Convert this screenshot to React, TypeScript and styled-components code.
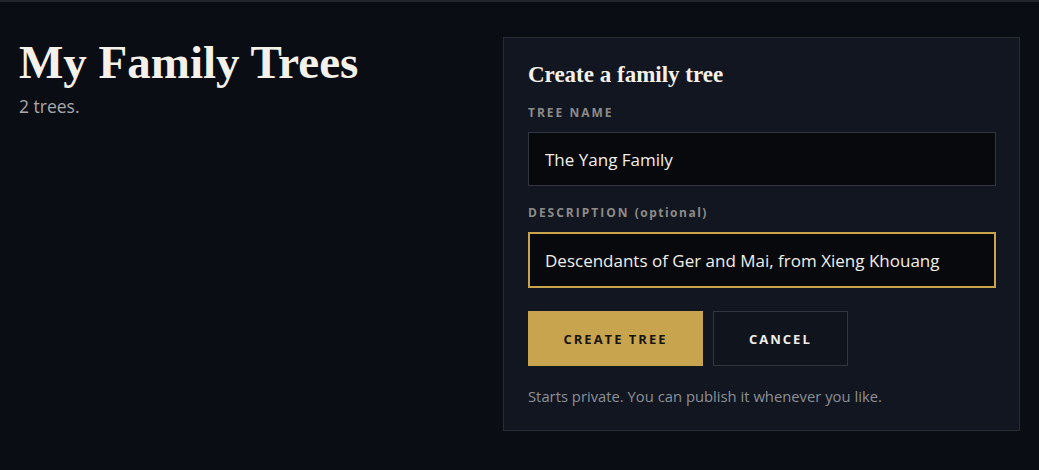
import React from 'react';
import styled, { createGlobalStyle } from 'styled-components';

const GlobalStyle = createGlobalStyle`
  html, body {
    margin: 0;
    padding: 0;
    background: #0b0d14;
  }
  * {
    box-sizing: border-box;
  }
`;

const Page = styled.div`
  min-height: 470px;
  border-top: 2px solid #22252c;
  background: #0b0d14;
  display: flex;
  justify-content: space-between;
  align-items: flex-start;
  padding: 35px 19px 0;
  font-family: 'Open Sans', 'Noto Sans', sans-serif;
`;

const Intro = styled.div``;

const Title = styled.h1`
  font-family: 'Liberation Serif', 'DejaVu Serif', serif;
  font-weight: 700;
  font-size: 47px;
  line-height: 50px;
  color: #f4f1ea;
  margin: 0 0 9px;
`;

const Count = styled.p`
  margin: 0;
  font-size: 17.5px;
  line-height: 20px;
  color: #a9a9ab;
`;

const Panel = styled.form`
  width: 517px;
  background: #121620;
  border: 1px solid #262b34;
  padding: 22px 24px 24px 24px;
`;

const PanelTitle = styled.h2`
  font-family: 'Liberation Serif', 'DejaVu Serif', serif;
  font-weight: 700;
  font-size: 23px;
  line-height: 30px;
  color: #f4f1ea;
  margin: 0 0 16px;
`;

const Field = styled.div`
  margin-bottom: 20px;
`;

const Label = styled.label`
  display: block;
  font-size: 12px;
  font-weight: 700;
  letter-spacing: 2px;
  text-transform: uppercase;
  color: #8c8b88;
  margin-bottom: 12px;
  line-height: 14px;
`;

const Optional = styled.span`
  text-transform: none;
  letter-spacing: 1.5px;
`;

const Input = styled.input<{ $focused?: boolean }>`
  display: block;
  width: 468px;
  height: ${p => (p.$focused ? '56px' : '54px')};
  background: #07090d;
  border: ${p => (p.$focused ? '2px solid #c9a44f' : '1px solid #30353f')};
  color: #f2efe8;
  font-family: 'Open Sans', 'Noto Sans', sans-serif;
  font-size: 17px;
  padding: 0 ${p => (p.$focused ? '15px' : '16px')};
  outline: none;
`;

const Actions = styled.div`
  display: flex;
  gap: 10px;
  margin-top: 23px;
`;

const Button = styled.button<{ $primary?: boolean }>`
  height: 55px;
  padding: 0 35px;
  min-width: ${p => (p.$primary ? '175px' : '134px')};
  background: ${p => (p.$primary ? '#c9a44f' : '#10141c')};
  color: ${p => (p.$primary ? '#17140e' : '#f1eee8')};
  border: ${p => (p.$primary ? 'none' : '1px solid #30353f')};
  font-family: 'Open Sans', 'Noto Sans', sans-serif;
  font-weight: 700;
  font-size: 13px;
  letter-spacing: 2px;
  text-transform: uppercase;
  cursor: pointer;
`;

const Note = styled.p`
  margin: 20px 0 0;
  font-size: 14.8px;
  line-height: 20px;
  color: #8c9098;
`;

export default function App() {
  return (
    <>
      <GlobalStyle />
      <Page>
        <Intro>
          <Title>My Family Trees</Title>
          <Count>2 trees.</Count>
        </Intro>
        <Panel onSubmit={e => e.preventDefault()}>
          <PanelTitle>Create a family tree</PanelTitle>
          <Field>
            <Label>Tree name</Label>
            <Input defaultValue="The Yang Family" />
          </Field>
          <Field>
            <Label>
              Description <Optional>(optional)</Optional>
            </Label>
            <Input $focused defaultValue="Descendants of Ger and Mai, from Xieng Khouang" />
          </Field>
          <Actions>
            <Button $primary type="submit">Create tree</Button>
            <Button type="button">Cancel</Button>
          </Actions>
          <Note>Starts private. You can publish it whenever you like.</Note>
        </Panel>
      </Page>
    </>
  );
}
